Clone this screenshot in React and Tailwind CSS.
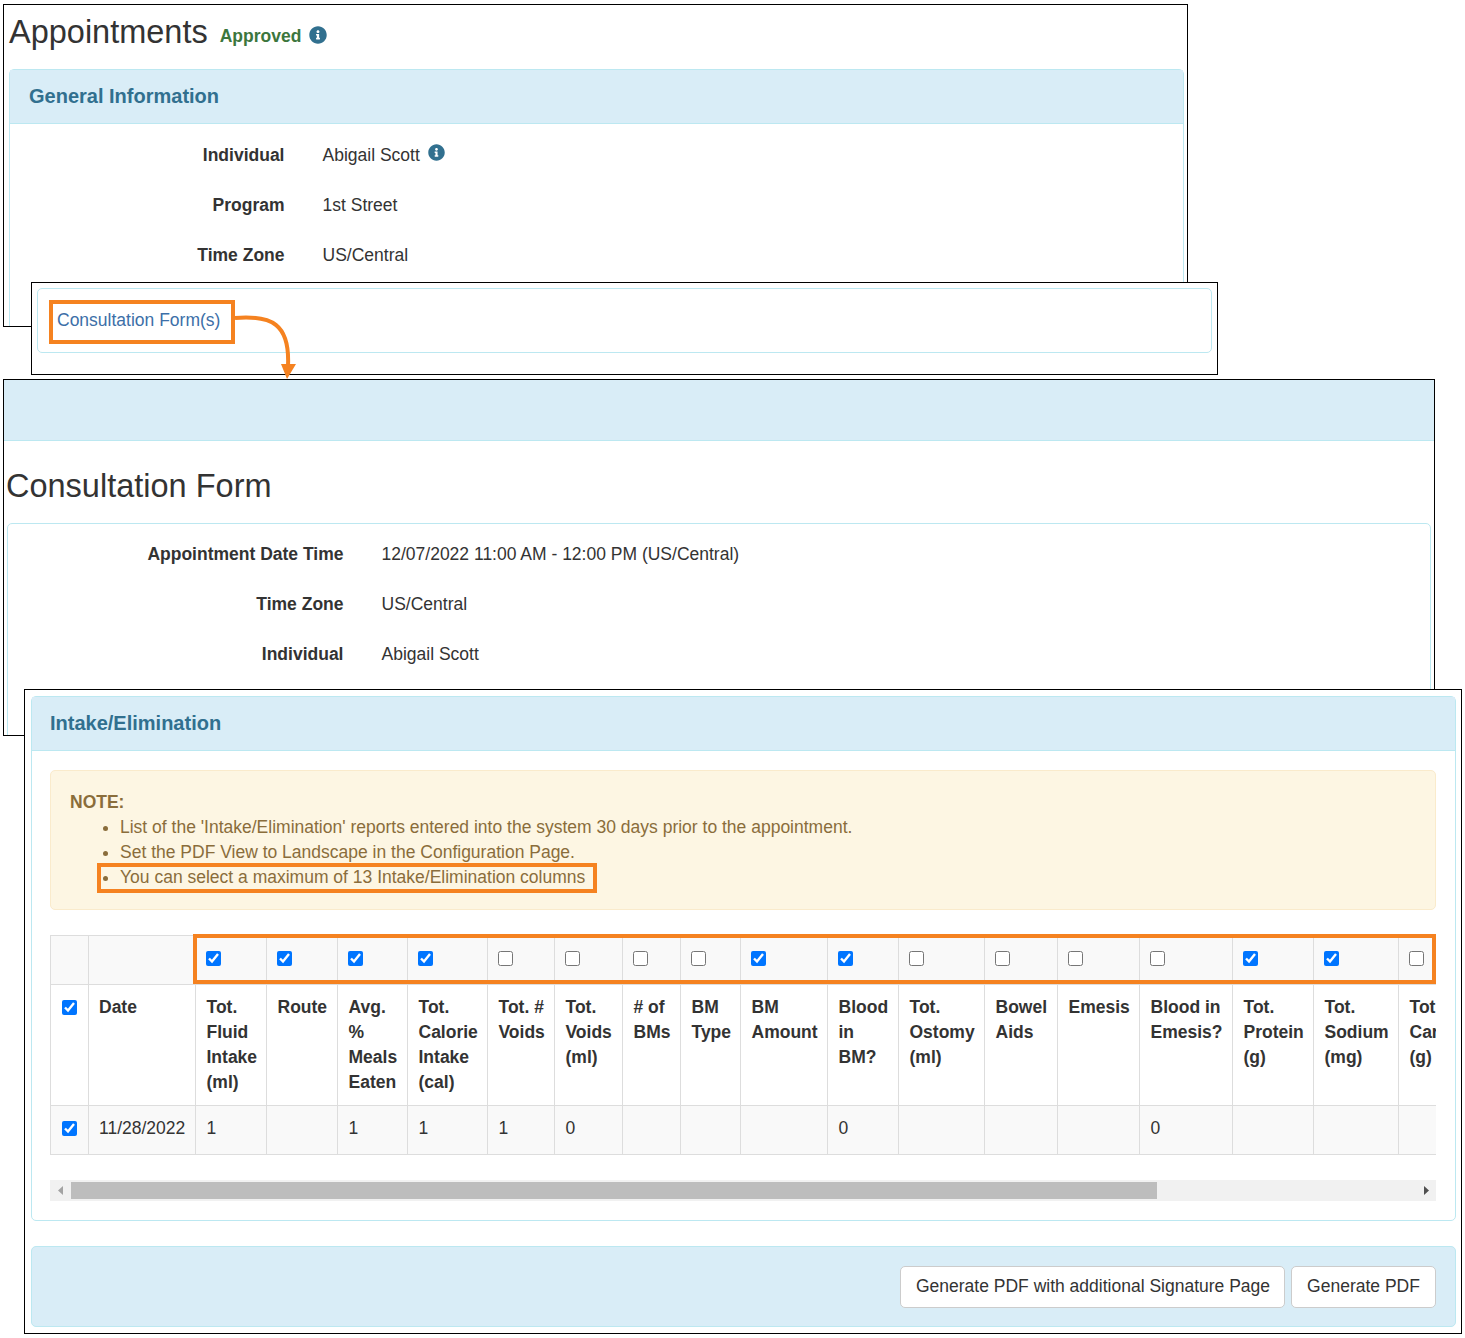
import { FaInfoCircle } from "react-icons/fa"

const columns = [
  { w: "w-[71px]", on: true, label: ["Tot.", "Fluid", "Intake", "(ml)"], val: "1" },
  { w: "w-[71px]", on: true, label: ["Route"], val: "" },
  { w: "w-[70px]", on: true, label: ["Avg.", "%", "Meals", "Eaten"], val: "1" },
  { w: "w-[80px]", on: true, label: ["Tot.", "Calorie", "Intake", "(cal)"], val: "1" },
  { w: "w-[67px]", on: false, label: ["Tot. #", "Voids"], val: "1" },
  { w: "w-[68px]", on: false, label: ["Tot.", "Voids", "(ml)"], val: "0" },
  { w: "w-[58px]", on: false, label: ["# of", "BMs"], val: "" },
  { w: "w-[60px]", on: false, label: ["BM", "Type"], val: "" },
  { w: "w-[87px]", on: true, label: ["BM", "Amount"], val: "" },
  { w: "w-[71px]", on: true, label: ["Blood", "in", "BM?"], val: "0" },
  { w: "w-[86px]", on: false, label: ["Tot.", "Ostomy", "(ml)"], val: "" },
  { w: "w-[73px]", on: false, label: ["Bowel", "Aids"], val: "" },
  { w: "w-[82px]", on: false, label: ["Emesis"], val: "" },
  { w: "w-[93px]", on: false, label: ["Blood in", "Emesis?"], val: "0" },
  { w: "w-[81px]", on: true, label: ["Tot.", "Protein", "(g)"], val: "" },
  { w: "w-[85px]", on: true, label: ["Tot.", "Sodium", "(mg)"], val: "" },
  { w: "w-[90px]", on: false, label: ["Tot.", "Carbs", "(g)"], val: "" },
]

function Check({ on }) {
  return <input type="checkbox" defaultChecked={on} className="mt-[5px] block h-[15px] w-[15px]" />
}

function Row({ label, value, labelW, children }) {
  return (
    <div className="flex h-[50px] items-center">
      <div className={`${labelW} text-right font-bold`}>{label}</div>
      <div className="ml-[38px] flex items-center gap-2">
        {value}
        {children}
      </div>
    </div>
  )
}

function Frame({ className, children }) {
  return <div className={`absolute overflow-hidden border border-black bg-white ${className}`}>{children}</div>
}

export default function App() {
  return (
    <div className="relative h-[1338px] w-[1465px] overflow-hidden bg-white font-['Liberation_Sans',Arial,sans-serif] text-[17.5px] leading-[25px] text-[#333]">
      {/* first window */}
      <Frame className="left-[3px] top-[4px] h-[323px] w-[1185px]">
        <div className="flex h-[64px] items-start pl-[5px]">
          <h1 className="text-[32.5px] leading-[54px]">Appointments</h1>
          <span className="ml-[12px] mt-[19px] font-bold text-[#3c763d]">Approved</span>
          <FaInfoCircle className="ml-[8px] mt-[21px] text-[18px] text-[#31708f]" />
        </div>
        <div className="ml-[5px] h-[400px] w-[1175px] rounded-t-[5px] border border-[#bce8f1]">
          <div className="flex h-[54px] items-center border-b border-[#bce8f1] bg-[#d9edf7] pl-[19px] text-[20px] font-bold text-[#31708f]">General Information</div>
          <div className="pt-[6px]">
            <Row label="Individual" value="Abigail Scott" labelW="w-[274.5px]">
              <FaInfoCircle className="mb-[5px] text-[17px] text-[#31708f]" />
            </Row>
            <Row label="Program" value="1st Street" labelW="w-[274.5px]" />
            <Row label="Time Zone" value="US/Central" labelW="w-[274.5px]" />
          </div>
        </div>
      </Frame>

      {/* consultation link window */}
      <Frame className="left-[31px] top-[282px] h-[93px] w-[1187px] p-[5px]">
        <div className="flex h-[65px] items-center rounded-[5px] border border-[#bce8f1] pl-[19px]">
          <a className="mb-[1px] text-[#3c6fa8]">Consultation Form(s)</a>
        </div>
      </Frame>

      {/* consultation form window */}
      <Frame className="left-[3px] top-[379px] h-[357px] w-[1432px]">
        <div className="h-[61px] border-b border-[#bce8f1] bg-[#d9edf7]" />
        <h1 className="pl-[2px] pt-[18px] text-[32.5px] leading-[54px]">Consultation Form</h1>
        <div className="ml-[3px] mt-[10px] h-[300px] w-[1424px] rounded-t-[5px] border border-[#bce8f1]">
          <div className="pt-[5px]">
            <Row label="Appointment Date Time" value="12/07/2022 11:00 AM - 12:00 PM (US/Central)" labelW="w-[335.5px]" />
            <Row label="Time Zone" value="US/Central" labelW="w-[335.5px]" />
            <Row label="Individual" value="Abigail Scott" labelW="w-[335.5px]" />
          </div>
        </div>
      </Frame>

      {/* intake window */}
      <Frame className="left-[24px] top-[689px] h-[645px] w-[1438px] p-[6px]">
        <div className="h-[525px] w-[1425px] rounded-[5px] border border-[#bce8f1]">
          <div className="flex h-[54px] items-center border-b border-[#bce8f1] bg-[#d9edf7] pl-[18px] text-[20px] font-bold text-[#31708f]">Intake/Elimination</div>
          <div className="pl-[18px] pr-[19px] pt-[19px]">
            <div className="h-[140px] rounded-[5px] border border-[#faebcc] bg-[#fdf6e3] pl-[19px] pt-[19px] text-[#8a6d3b]">
              <div className="font-bold">NOTE:</div>
              <ul className="list-disc pl-[50px]">
                <li>List of the 'Intake/Elimination' reports entered into the system 30 days prior to the appointment.</li>
                <li>Set the PDF View to Landscape in the Configuration Page.</li>
                <li>You can select a maximum of 13 Intake/Elimination columns</li>
              </ul>
            </div>

            <div className="mt-[25px] w-[1386px] overflow-hidden">
              <table className="w-[1438px] table-fixed border-collapse">
                <colgroup>
                  <col className="w-[38px]" />
                  <col className="w-[107px]" />
                  {columns.map((c, i) => <col key={i} className={c.w} />)}
                </colgroup>
                <tbody>
                  <tr className="h-[49px] bg-[#f9f9f9]">
                    <td className="border border-[#ddd]" />
                    <td className="border border-[#ddd]" />
                    {columns.map((c, i) => (
                      <td key={i} className="border border-[#ddd] px-[10px] py-[10px] align-top"><Check on={c.on} /></td>
                    ))}
                  </tr>
                  <tr className="h-[121px] bg-white">
                    <td className="border border-[#ddd] pl-[11px] pt-[10px] align-top"><Check on /></td>
                    <td className="border border-[#ddd] px-[10px] pt-[10px] align-top font-bold">Date</td>
                    {columns.map((c, i) => (
                      <td key={i} className="whitespace-nowrap border border-[#ddd] py-[10px] pl-[10.5px] pr-[10px] align-top font-bold">
                        {c.label.map((l, j) => <div key={j}>{l}</div>)}
                      </td>
                    ))}
                  </tr>
                  <tr className="h-[49px] bg-[#f9f9f9]">
                    <td className="border border-[#ddd] pl-[11px] pt-[10px] align-top"><Check on /></td>
                    <td className="whitespace-nowrap border border-[#ddd] px-[10px] pt-[10px] align-top">11/28/2022</td>
                    {columns.map((c, i) => (
                      <td key={i} className="border border-[#ddd] pl-[10.5px] pr-[10px] pt-[10px] align-top">{c.val}</td>
                    ))}
                  </tr>
                </tbody>
              </table>
            </div>

            <div className="mt-[25px] flex h-[21px] w-[1386px] items-center bg-[#f1f1f1]">
              <svg width="21" height="21" viewBox="0 0 21 21" className="shrink-0"><path d="M13 6v9l-5-4.5z" fill="#a3a3a3" /></svg>
              <div className="h-[17px] w-[1086px] bg-[#bdbdbd]" />
              <div className="flex-1" />
              <svg width="21" height="21" viewBox="0 0 21 21" className="shrink-0"><path d="M9 6v9l5-4.5z" fill="#505050" /></svg>
            </div>
          </div>
        </div>

        <div className="mt-[25px] flex h-[81px] w-[1425px] items-center justify-end gap-[6px] rounded-[5px] border border-[#bce8f1] bg-[#d9edf7] pr-[19px]">
          <button className="h-[42px] w-[385px] rounded-[5px] border border-[#ccc] bg-white pl-[1px]">Generate PDF with additional Signature Page</button>
          <button className="h-[42px] w-[145px] rounded-[5px] border border-[#ccc] bg-white">Generate PDF</button>
        </div>
      </Frame>

      {/* orange callouts */}
      <div className="absolute left-[49px] top-[300px] h-[44px] w-[186px] border-4 border-[#f58220]" />
      <div className="absolute left-[97px] top-[863px] h-[30px] w-[500px] border-4 border-[#f58220]" />
      <div className="absolute left-[193px] top-[934px] h-[50px] w-[1243px] border-4 border-[#f58220]" />
      <svg className="absolute left-[230px] top-[310px]" width="75" height="72" viewBox="0 0 75 72">
        <path d="M5 8 C 42 5, 60 14, 58 56" fill="none" stroke="#f58220" strokeWidth="4" />
        <path d="M51 54 L66 54 L57 69 Z" fill="#f58220" />
      </svg>
    </div>
  )
}
